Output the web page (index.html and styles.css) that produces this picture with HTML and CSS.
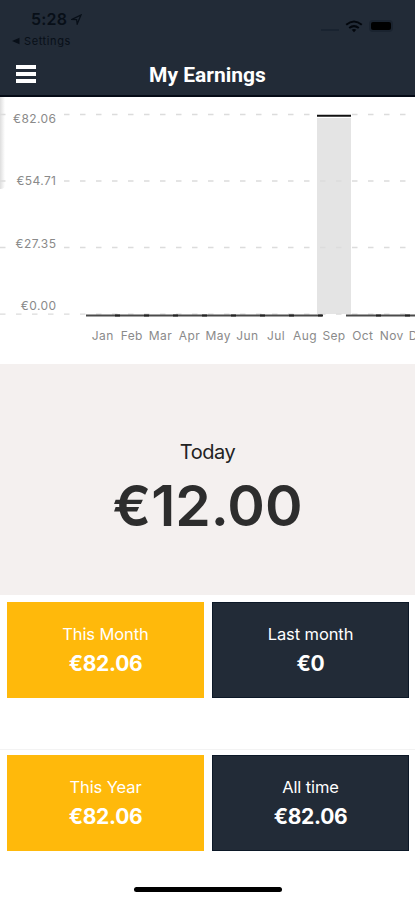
FILE: index.html
```html
<!DOCTYPE html>
<html lang="en">
<head>
<meta charset="utf-8">
<title>My Earnings</title>
<link rel="stylesheet" href="styles.css">
</head>
<body>
<header class="header">
  <div class="status">
    <div class="clock">
      <span class="time">5:28</span>
      <svg class="location" width="11" height="11" viewBox="0 0 11 11"><path d="M1 5.4 10 1 6.2 10 5.6 5.7Z" fill="none" stroke="#080f18" stroke-width="1.3"/></svg>
    </div>
    <div class="signals">
      <span class="cell"></span>
      <svg width="18" height="13" viewBox="0 0 18 13" fill="none" stroke="#03070d" stroke-width="2"><path d="M1.2 4.8Q9-1.8 16.8 4.8M4.2 8Q9 4.2 13.8 8"/><path d="M6.7 9.7Q9 8.3 11.3 9.7L9 12.2Z" fill="#03070d" stroke="none"/></svg>
      <span class="battery"></span>
    </div>
  </div>
  <div class="back"><svg width="8" height="8" viewBox="0 0 8 8"><path d="M0 4 7.5.8v6.4Z" fill="#080f18"/></svg><span>Settings</span></div>
  <div class="titlebar">
    <div class="menu"><i></i><i></i><i></i></div>
    <h1>My Earnings</h1>
  </div>
</header>
<section class="chart">
  <svg width="415" height="267" viewBox="0 97 415 267">
    <defs><linearGradient id="edge"><stop offset="0" stop-color="#dedede"/><stop offset="1" stop-color="#fff"/></linearGradient></defs>
    <path d="M0 97h5v88q0 4-5 4Z" fill="url(#edge)"/>
    <rect x="317" y="118" width="34" height="196" fill="#e4e4e4"/>
    <g class="grid">
      <path d="M0 114.5H6M64 114.5H310M352 114.5H415"/>
      <path d="M0 181H6M64 181H415"/>
      <path d="M0 247.5H6M64 247.5H415"/>
      <path d="M0 314.2H415"/>
    </g>
    <path d="M317 115.7H351" stroke="#111" stroke-width="2"/>
    <path d="M86 315.6H322M346 315.6H415" stroke="#4b4b4b" stroke-width="2"/>
    <path d="M115 315.6h5m24 0h5m24 0h5m24 0h5m24 0h5m24 0h5m24 0h5m24 0h5m53 0h5m24 0h5" stroke="#222" stroke-width="2"/>
    <g class="amounts">
      <text x="56.4" y="122.8">€82.06</text><text x="56.4" y="185">€54.71</text>
      <text x="56.4" y="247.8">€27.35</text><text x="56.4" y="310">€0.00</text>
    </g>
    <g class="months">
      <text x="102.7" y="340">Jan</text><text x="131.8" y="340">Feb</text><text x="160.5" y="340">Mar</text><text x="189.5" y="340">Apr</text>
      <text x="218.3" y="340">May</text><text x="247.3" y="340">Jun</text><text x="276" y="340">Jul</text><text x="305" y="340">Aug</text>
      <text x="334" y="340">Sep</text><text x="362.8" y="340">Oct</text><text x="391.8" y="340">Nov</text><text x="420.5" y="340">Dec</text>
    </g>
  </svg>
</section>
<section class="today">
  <div class="today-label">Today</div>
  <div class="today-value">€12.00</div>
</section>
<section class="cards">
  <div class="card gold"><div class="label">This Month</div><div class="value">€82.06</div></div>
  <div class="card navy"><div class="label">Last month</div><div class="value">€0</div></div>
</section>
<section class="cards second">
  <div class="card gold"><div class="label">This Year</div><div class="value">€82.06</div></div>
  <div class="card navy"><div class="label">All time</div><div class="value">€82.06</div></div>
</section>
<div class="home"></div>
</body>
</html>
```
FILE: styles.css
```css
* { box-sizing: border-box; }
body { margin: 0; width: 415px; height: 900px; overflow: hidden; background: #fff; font-family: Inter, "Liberation Sans", sans-serif; }
.header { height: 97px; background: #222b37; border-bottom: 2px solid #050b16; color: #080f18; }
.status { display: flex; justify-content: space-between; height: 34px; padding: 9px 22px 0 31px; }
.clock { display: flex; gap: 4px; height: 20px; align-items: center; }
.time { font-size: 16px; font-weight: 600; line-height: 20px; letter-spacing: 0.2px; }
.signals { display: flex; align-items: center; height: 34px; }
.signals svg { margin: 0 6px 0 6px; }
.cell { width: 18px; height: 2px; margin-top: 8px; background: #192330; }
.battery { width: 24px; height: 12px; border: 2px solid #1a232f; border-radius: 4px; background: #000; }
.back { display: flex; align-items: center; gap: 4px; height: 13px; padding-left: 12px; font-size: 11px; letter-spacing: 0.6px; }
.titlebar { display: grid; grid-template-columns: 1fr auto 1fr; align-items: center; height: 54px; }
.menu { display: grid; gap: 3px; width: 20px; margin: -1px 0 0 16px; }
.menu i { height: 4px; background: #fff; }
h1 { margin: 2px 0 0; color: #fff; font: 700 21px/24px Roboto, sans-serif; }
.chart { height: 267px; }
.chart svg { display: block; }
.grid { fill: none; stroke: #dcdcdc; stroke-width: 1.3; stroke-dasharray: 5.5 10.5; }
.amounts, .months { fill: #8a8a8a; font-size: 12px; }
.amounts { text-anchor: end; letter-spacing: 0.4px; }
.months { text-anchor: middle; letter-spacing: 0.4px; }
.today { height: 231px; padding-top: 75px; background: #f4f0ef; text-align: center; }
.today-label { font-size: 20px; line-height: 26px; letter-spacing: -0.5px; color: #222; }
.today-value { margin-top: 7px; font-size: 57px; line-height: 68px; font-weight: 600; color: #2d2d2d; }
.cards { display: grid; grid-template-columns: 197px 197px; gap: 8px; height: 154px; padding: 7px 7px 0; }
.second { border-top: 1px solid #f3f3f3; padding-top: 5px; height: 131px; }
.card { height: 96px; padding-top: 21px; color: #fff; text-align: center; }
.gold { background: #ffb90b; }
.navy { background: #222b37; border: 1px solid #0c1827; padding-top: 20px; }
.label { font-size: 16.5px; line-height: 22px; letter-spacing: -0.1px; }
.value { margin-top: 5px; font-size: 21px; line-height: 28px; font-weight: 700; letter-spacing: -0.3px; }
.home { width: 148px; height: 5px; margin: 7px auto 0 134px; border-radius: 3px; background: #000; }
```
